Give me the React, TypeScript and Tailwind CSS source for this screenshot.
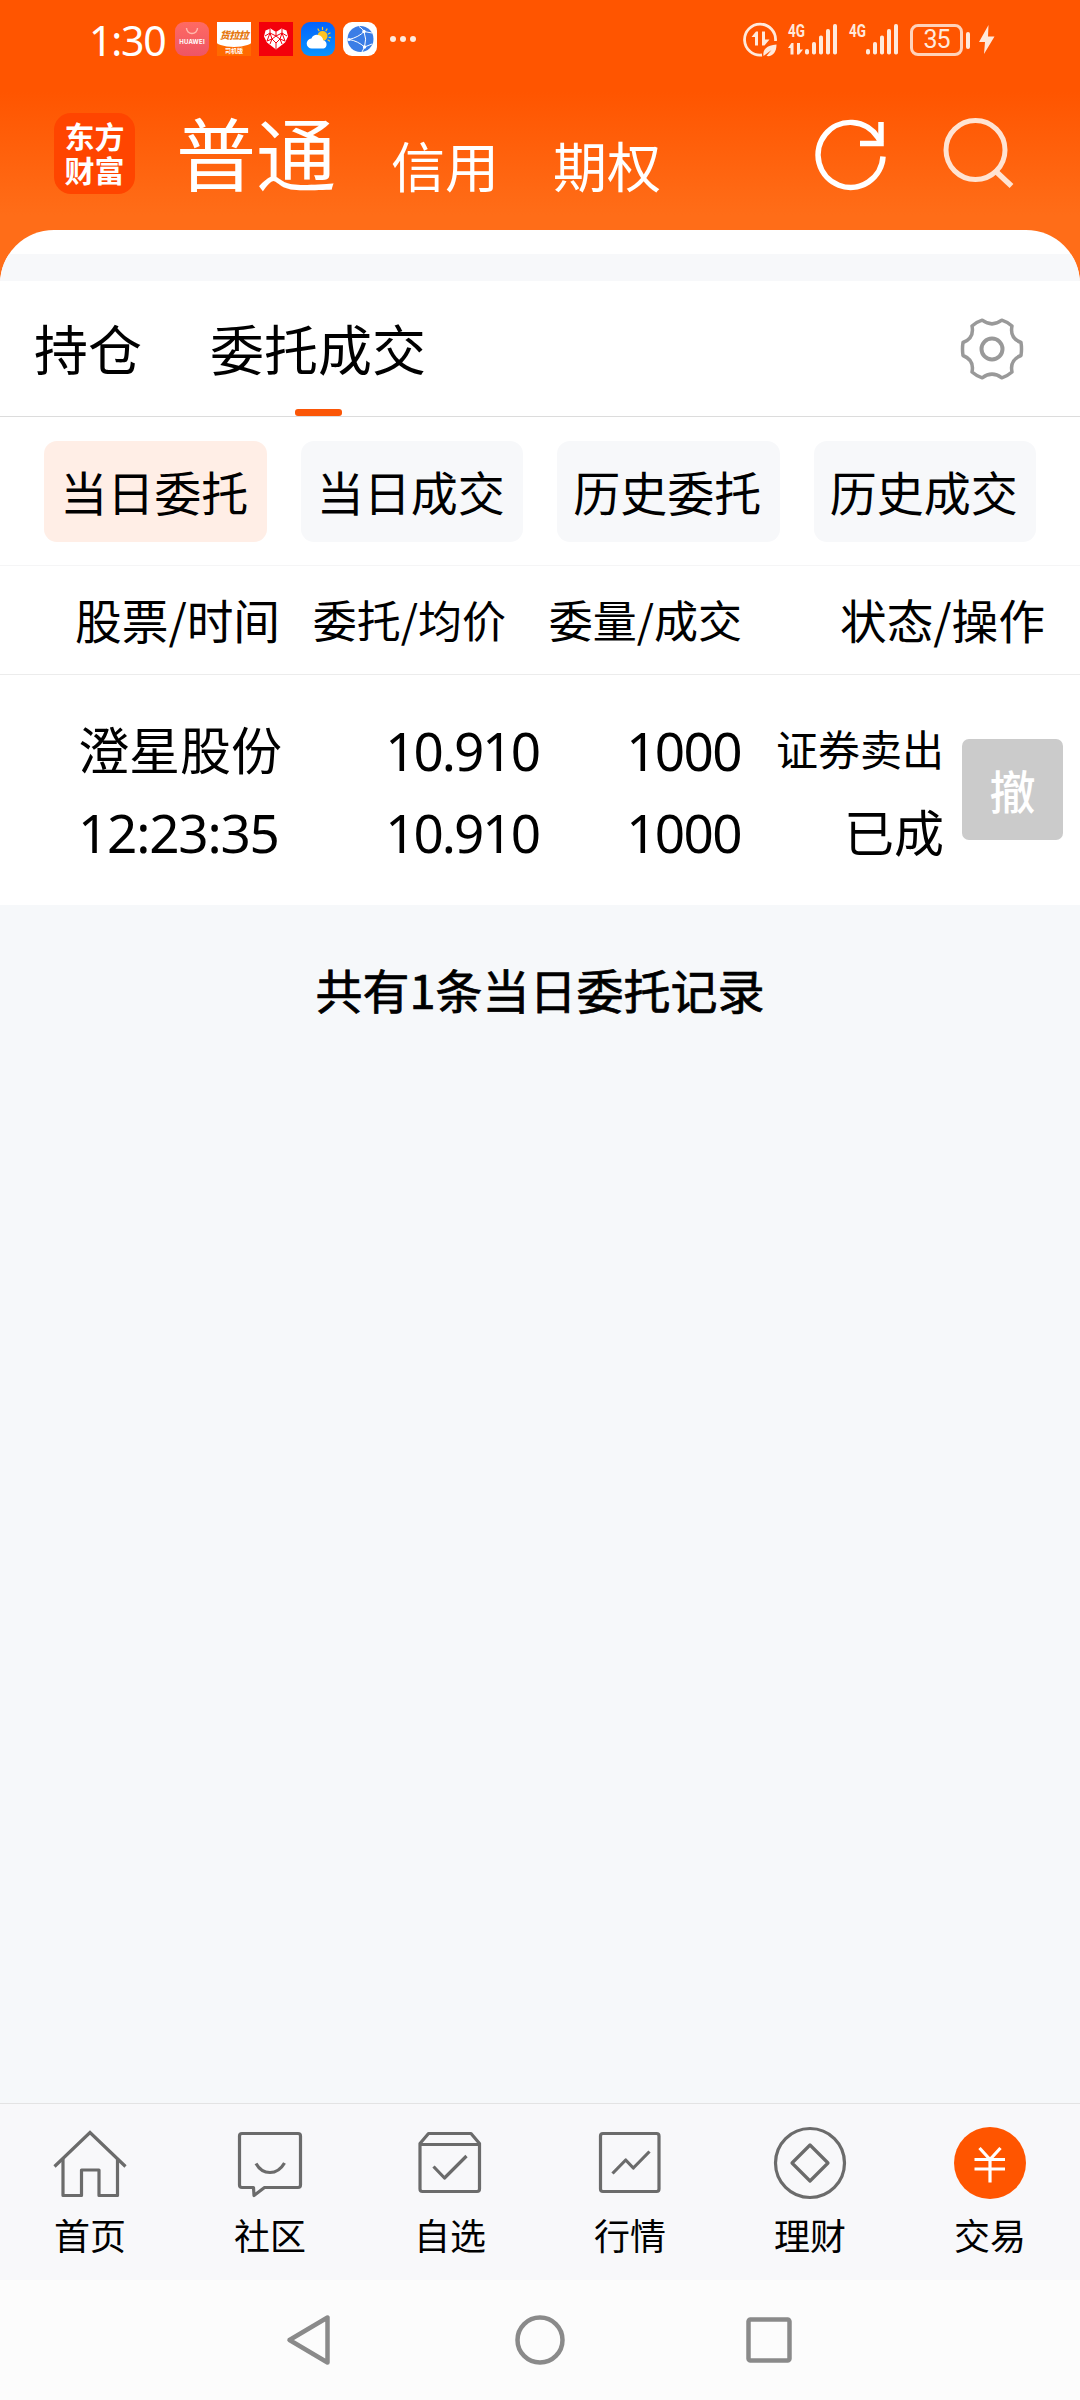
import type { ReactNode } from 'react';

const CJK = "font-['Noto_Sans_CJK_SC',sans-serif]";
const NUM = "font-['Noto_Sans',sans-serif]";

function AppBadges() {
  return (
    <div className="flex gap-2">
      <div className="flex h-[34px] w-[34px] flex-col items-center rounded-[9px] bg-gradient-to-b from-[#ff6a62] to-[#ee5566]">
        <svg width="14" height="8" viewBox="0 0 14 8" className="mt-[5px]" fill="none" stroke="#ffb9ae" strokeWidth="1.4">
          <path d="M1.5 1a5.5 5.5 0 0 0 11 0" />
        </svg>
        <span className="mt-[3px] font-['Inter',sans-serif] text-[6px] leading-[8px] font-bold tracking-[0.2px] text-white">HUAWEI</span>
      </div>
      <div className="flex h-[34px] w-[34px] flex-col items-center overflow-hidden bg-[#ff6a00]">
        <div className="flex h-[25px] w-[38px] shrink-0 items-center justify-center rounded-b-[50%_7px] bg-white">
          <span className="font-['Noto_Sans_CJK_SC',sans-serif] text-[10px] leading-[12px] font-black tracking-[-0.5px] text-[#e5780f] italic">货拉拉</span>
        </div>
        <span className="font-['Noto_Sans_CJK_SC',sans-serif] text-[6px] leading-[8px] font-bold text-white">司机版</span>
      </div>
      <svg width="34" height="34" viewBox="0 0 34 34">
        <rect width="34" height="34" fill="#f3000b" />
        <path d="M17 27.5 8 20.5 5 14.5 6.5 8.5 11.5 6.5 17 10 22.500 6.500 27.500 8.500 29 14.500 26 20.500Z" fill="#fff" />
        <path d="M6 14l5-3 6 3 6-3 5 3M11 7v4l-3 8 5-2 4 4 4-4 5 2-3-8V7M11 11l2 6 4-3 4 3 2-6M13 17l-2 5M21 17l2 5M17 21v6M17 10v4" fill="none" stroke="#f3000b" strokeWidth="1" />
      </svg>
      <svg width="34" height="34" viewBox="0 0 34 34">
        <defs>
          <linearGradient id="sky" x1="0" y1="0" x2="0" y2="1">
            <stop offset="0" stopColor="#0462fb" />
            <stop offset="1" stopColor="#0a94fe" />
          </linearGradient>
        </defs>
        <rect width="34" height="34" rx="9" fill="url(#sky)" />
        <circle cx="21.500" cy="14" r="5" fill="#ffc421" />
        <path d="M21.500 5.500v2M26 7l-1 1.800M29 11l-1.800 1M29.500 15.500l-1.500-.2M17 7l1 1.800M28.500 19l-1.500-1" stroke="#ffc421" strokeWidth="1.300" strokeLinecap="round" />
        <path d="M11 26.500a5 5 0 0 1-.6-10 6.200 6.200 0 0 1 11.800 1.700 4.300 4.300 0 0 1 .3 8.300Z" fill="#fff" />
      </svg>
      <svg width="34" height="34" viewBox="0 0 34 34">
        <rect width="34" height="34" rx="9" fill="#fff" />
        <circle cx="17.500" cy="17" r="13" fill="#3b7de6" />
        <g fill="none" stroke="#fff" strokeWidth="1">
          <path d="M6 17.500Q16 15 21 9.500M6 17.500Q15 19 21.500 25M21 9.500Q24 17 21.500 25M16 4.500Q20 7 21 9.500M21 9.500L29 11M21.500 25L29 22M21.500 25L19 30" />
        </g>
        <g fill="#fff">
          <circle cx="6" cy="17.500" r="1.500" />
          <circle cx="21" cy="9.500" r="1.700" />
          <circle cx="21.500" cy="25" r="1.700" />
        </g>
      </svg>
    </div>
  );
}

function Signal({ arrows }: { arrows?: boolean }) {
  return (
    <svg width="52" height="34" viewBox="0 0 52 34" fill="#ffe9dc" className="overflow-visible">
      <text x="0" y="15" textLength="17" lengthAdjust="spacingAndGlyphs" fontSize="18" fontWeight="700" fontFamily="Roboto, sans-serif">4G</text>
      {arrows && <path d="M3.500 21 0 26h2.500v6.500H5.500V21ZM9 21v11.500h2L15 27.500h-3V21Z" />}
      <rect x="17" y="27" width="4" height="5.500" rx="1.800" />
      <rect x="24" y="20" width="4" height="12.500" rx="1.800" />
      <rect x="31" y="13.500" width="4" height="19" rx="1.800" />
      <rect x="38" y="7" width="4" height="25.500" rx="1.800" />
      <rect x="45" y="2" width="4" height="30.500" rx="1.800" />
    </svg>
  );
}

function StatusBar() {
  return (
    <div className="flex h-[78px] items-start pt-[22px]">
      <span className={`${NUM} -mt-[1px] ml-[89px] w-[86px] text-[41px] leading-[38px] tracking-[-1.200px] text-white`}>1:30</span>
      <AppBadges />
      <div className="mt-[14px] ml-[13px] flex gap-[4px]">
        <i className="h-[6px] w-[6px] rounded-full bg-[#ffe9dc]" />
        <i className="h-[6px] w-[6px] rounded-full bg-[#ffe9dc]" />
        <i className="h-[6px] w-[6px] rounded-full bg-[#ffe9dc]" />
      </div>
      <div className="mr-[85px] ml-auto flex">
        <svg width="36" height="36" viewBox="0 0 36 36" className="mr-[9px]" fill="none" stroke="#ffe9dc">
          <path d="M19 33A15.500 15.500 0 1 1 32.500 19" strokeWidth="2.800" />
          <path d="M13 9.500 8.500 15H12v8.500h3V9.500ZM19 9.500v14h2.500l5-6H22v-8Z" fill="#ffe9dc" stroke="none" />
          <path d="M20.500 34c-1-6 3-11 13-11.500 0 8-4 12.500-10 11.500l5-6-6 4.500Z" fill="#ffe9dc" stroke="none" />
        </svg>
        <div className="mr-[9px]"><Signal arrows /></div>
        <Signal />
        <div className="mt-[2px] ml-[9px] flex h-[32px] w-[53px] items-center justify-center rounded-[8px] border-[3px] border-[#ffd2ba]">
          <span className="font-['Roboto',sans-serif] text-[25px] leading-[24px] tracking-[-1px] text-[#ffe9dc]">35</span>
        </div>
        <i className="mt-[10px] ml-[3px] h-[17px] w-[4px] rounded-[2px] bg-[#ffe9dc]" />
        <svg width="16" height="30" viewBox="0 0 16 30" className="mt-[3px] ml-[9px]" fill="#ffe9dc">
          <path d="M9.500 0 0 17h6L5 29 15.500 11.500H9Z" />
        </svg>
      </div>
    </div>
  );
}

function Header() {
  return (
    <div className="flex h-[152px] items-start">
      <div className={`${CJK} mt-[35px] ml-[54px] flex h-[81px] w-[81px] flex-col items-center justify-center rounded-[17px] bg-[#ff4500] pb-[3px] text-[30px] leading-[34px] font-bold text-white`}>
        <span>东方</span>
        <span>财富</span>
      </div>
      <span className={`${CJK} mt-[32px] ml-[41px] text-[80px] leading-[80px] text-white`}>普通</span>
      <span className={`${CJK} mt-[57px] ml-[55px] text-[54px] leading-[60px] text-white`}>信用</span>
      <span className={`${CJK} mt-[57px] ml-[54px] text-[54px] leading-[60px] text-white`}>期权</span>
      <svg width="76" height="76" viewBox="0 0 76 76" className="mt-[39px] mr-[55px] ml-auto" fill="none" stroke="#fff" strokeWidth="5.500">
        <path d="M71 39.500A32.500 32.500 0 1 1 66 20.500L69 26" />
        <path d="M69 5v21.500H48" />
      </svg>
      <svg width="72" height="72" viewBox="0 0 72 72" className="mt-[40px] mr-[65px]" fill="none" stroke="#ffe3d2" strokeWidth="5">
        <circle cx="32.500" cy="32" r="29.500" />
        <path d="M53 53.500 68.500 68" strokeWidth="5.500" />
      </svg>
    </div>
  );
}

function GearIcon() {
  return (
    <svg width="66" height="66" viewBox="-33 -33 66 66" fill="none" stroke="#999" strokeWidth="3.500" strokeLinejoin="round">
      <path d="M-9.800-28.800Q0-21.500 9.800-28.800Q15.500-27 20-23Q17.500-11 29-6.500Q30 0 29 6.500Q17.500 11 20 23Q15.500 27 9.800 28.800Q0 21.500-9.800 28.800Q-15.500 27-20 23Q-17.500 11-29 6.500Q-30 0-29-6.500Q-17.500-11-20-23Q-15.500-27-9.800-28.800Z" />
      <circle r="10.500" strokeWidth="4" />
    </svg>
  );
}

function Tabs() {
  return (
    <div className={`${CJK} flex h-[136px] items-start border-b border-[#dcdcdc] bg-white text-[54px] leading-[60px] text-black`}>
      <span className="mt-[37px] ml-[34px]">持仓</span>
      <div className="ml-[68px] flex flex-col items-center">
        <span className="mt-[37px]">委托成交</span>
        <i className="mt-[31px] h-[7px] w-[47px] rounded-[3px] bg-[#fb5607]" />
      </div>
      <div className="mt-[35px] mr-[55px] ml-auto"><GearIcon /></div>
    </div>
  );
}

function Filters() {
  const items = ['当日委托', '当日成交', '历史委托', '历史成交'];
  return (
    <div className={`${CJK} flex h-[149px] gap-[34px] border-b border-[#f5f5f6] bg-white px-[44px] pt-[24px] text-[47px] text-black`}>
      {items.map((t, i) => (
        <div key={t} className={`flex h-[101px] flex-1 items-center justify-center rounded-[13px] pr-[2px] leading-[99px] whitespace-nowrap ${i === 0 ? 'bg-[#ffeee6]' : 'bg-[#f7f8fa]'}`}>
          <span className="-mt-[2px]">{t}</span>
        </div>
      ))}
    </div>
  );
}

function OrderTable() {
  return (
    <>
      <div className={`${CJK} flex h-[109px] items-start border-b border-[#ececec] bg-white pt-[20px] leading-[66px] text-black`}>
        <span className="w-[239px] pl-[75px] text-[46.700px] whitespace-nowrap">股票/时间</span>
        <span className="w-[267px] text-right text-[44px]">委托/均价</span>
        <span className="w-[236px] text-right text-[44px]">委量/成交</span>
        <span className="w-[303px] text-right text-[46.700px]">状态/操作</span>
      </div>
      <div className="flex h-[230px] bg-white pt-[35px] text-black">
        <div className="flex w-[300px] flex-col pl-[78px]">
          <span className={`${CJK} text-[51px] leading-[76px]`}>澄星股份</span>
          <span className={`${NUM} mt-[6px] text-[53px] leading-[82px] tracking-[-1.200px]`}>12:23:35</span>
        </div>
        <div className={`${NUM} flex w-[239px] flex-col text-right text-[53px] leading-[82px] tracking-[-2px]`}>
          <span>10.910</span>
          <span>10.910</span>
        </div>
        <div className={`${NUM} flex w-[202px] flex-col text-right text-[53px] leading-[82px] tracking-[-1.600px]`}>
          <span>1000</span>
          <span>1000</span>
        </div>
        <div className={`${CJK} flex w-[203px] flex-col text-right`}>
          <span className="mt-[1px] text-[42px] leading-[74px]">证券卖出</span>
          <span className="mt-[4px] text-[50px] leading-[82px]">已成</span>
        </div>
        <div className={`${CJK} mt-[29px] ml-[18px] h-[101px] w-[101px] rounded-[7px] bg-[#cbcbcb] text-center text-[46px] leading-[101px] font-medium text-white`}>撤</div>
      </div>
    </>
  );
}

function TabIcon({ children }: { children: ReactNode }) {
  return (
    <svg width="80" height="84" viewBox="0 0 80 84" fill="none" stroke="#6b6b6b" strokeWidth="3.200" strokeLinejoin="round">
      {children}
    </svg>
  );
}

const bottomTabs: { label: string; icon: ReactNode }[] = [
  {
    label: '首页',
    icon: (
      <>
        <path d="M4.500 46.500 40 12.500 75.500 46.500" strokeLinejoin="miter" />
        <path d="M13 39v36.500h18.500V50H49v25.500h18.500V39" />
      </>
    ),
  },
  {
    label: '社区',
    icon: (
      <>
        <path d="M12 13.500h56q2.500 0 2.500 2.500v49q0 2.500-2.500 2.500H34.500L24 75.500 23.500 67.500H12q-2.500 0-2.500-2.500V16q0-2.500 2.500-2.500Z" />
        <path d="M26 43.500q5 9 14 9t14.500-9.500" />
      </>
    ),
  },
  {
    label: '自选',
    icon: (
      <>
        <path d="M10 23.500 18.500 13.500H61L69.500 23.500V69q0 2.500-2.500 2.500H12.500Q10 71.500 10 69ZM10 24.500H69.500" />
        <path d="M23.500 46.500 34.500 58 56.500 36" />
      </>
    ),
  },
  {
    label: '行情',
    icon: (
      <>
        <rect x="10.500" y="13.500" width="58.500" height="58" rx="2.500" />
        <path d="M22.500 53.500 35.700 40 43.300 48 59.500 31.500" />
      </>
    ),
  },
  {
    label: '理财',
    icon: (
      <>
        <circle cx="40" cy="43" r="34.500" />
        <path d="M40 25 58 43 40 61 22 43Z" />
      </>
    ),
  },
  {
    label: '交易',
    icon: (
      <>
        <circle cx="40" cy="43" r="36" fill="#ff5500" stroke="none" />
        <path d="M29.500 28 40 39.500 50.500 28M40 39v23.500M24.500 39.500h30.500M24.500 49h30.500" stroke="#fff" />
      </>
    ),
  },
];

function BottomBar() {
  return (
    <div className="flex h-[177px] border-t border-[#e3e3e3] bg-[#f8f8fa] pt-[16px]">
      {bottomTabs.map((t) => (
        <div key={t.label} className="flex flex-1 flex-col items-center">
          <TabIcon>{t.icon}</TabIcon>
          <span className={`${CJK} mt-[6px] text-[36px] leading-[48px] text-black`}>{t.label}</span>
        </div>
      ))}
    </div>
  );
}

function SystemNav() {
  return (
    <div className="flex h-[120px] items-center justify-center gap-[174px] bg-[#fcfcfc]">
      <svg width="56" height="56" viewBox="0 0 56 56" fill="none" stroke="#8a8a8a" strokeWidth="4.500" strokeLinejoin="round">
        <path d="M7.500 28 45.500 5.500V50.500Z" />
      </svg>
      <svg width="56" height="56" viewBox="0 0 56 56" fill="none" stroke="#8a8a8a" strokeWidth="4.500">
        <circle cx="28" cy="28" r="22.500" />
      </svg>
      <svg width="56" height="56" viewBox="0 0 56 56" fill="none" stroke="#8a8a8a" strokeWidth="4.500">
        <rect x="6.500" y="7.500" width="41" height="41" rx="2" />
      </svg>
    </div>
  );
}

export default function App() {
  return (
    <div className="flex h-[2400px] w-[1080px] flex-col overflow-hidden bg-[#f6f8fa]">
      <div className="h-[290px] shrink-0 bg-[linear-gradient(to_bottom,#ff5500_0px,#ff5500_92px,#ff6d18_215px,#ff6d18_230px)]">
        <StatusBar />
        <Header />
        <div className="h-[60px] overflow-hidden rounded-t-[54px] bg-white pt-[24px]">
          <div className="h-[27px] bg-[#f7f8fa]" />
        </div>
      </div>
      <div className="-mt-[9px] flex flex-1 flex-col">
        <Tabs />
        <Filters />
        <OrderTable />
        <p className={`${CJK} pt-[51px] text-center text-[47px] leading-[66px] text-black [-webkit-text-stroke:0.7px_#000]`}>共有1条当日委托记录</p>
      </div>
      <BottomBar />
      <SystemNav />
    </div>
  );
}
